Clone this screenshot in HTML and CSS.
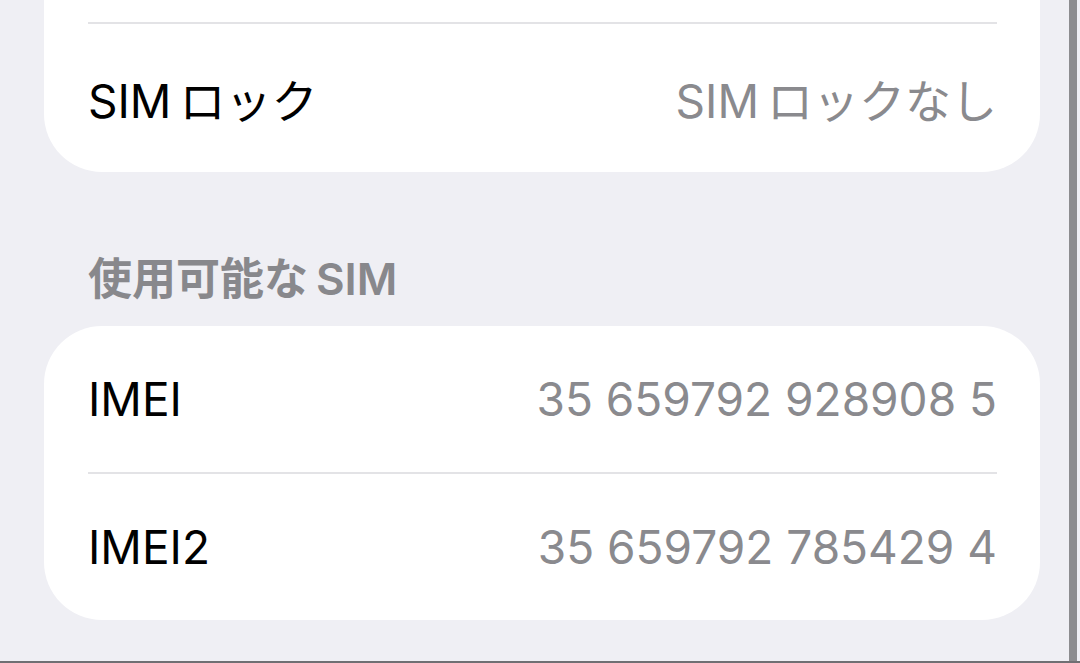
FILE: index.html
```html
<!DOCTYPE html>
<html lang="ja">
  <head>
    <meta charset="UTF-8" />
    <meta name="viewport" content="width=device-width, initial-scale=1.0" />
    <title>情報</title>
    <link rel="stylesheet" href="styles.css">
  </head>
  <body>
    <div class="screen">
      <div class="page">
        <!-- SIMロック start -->
        <div class="card card-top">
          <div class="row-cut"></div>
          <div class="row row-sep row-last">
            <span class="label">SIM<span class="kana">ロック</span></span>
            <span class="value">SIM<span class="kana">ロックなし</span></span>
          </div>
        </div>
        <!-- SIMロック end -->

        <!-- 使用可能なSIM start -->
        <h3 class="section-title">使用可能な<span class="kana">SIM</span></h3>
        <div class="card">
          <div class="row">
            <span class="label">IMEI</span>
            <span class="value">35 659792 928908 5</span>
          </div>
          <div class="row row-sep">
            <span class="label">IMEI2</span>
            <span class="value">35 659792 785429 4</span>
          </div>
        </div>
        <!-- 使用可能なSIM end -->
      </div>
      <div class="edge"></div>
    </div>
  </body>
</html>
```

FILE: styles.css
```css
* {
    margin: 0;
    padding: 0;
    box-sizing: border-box;
}

body {
    background-color: #efeff4;
    font-family: Inter, "Noto Sans CJK JP", sans-serif;
    overflow: hidden;
}

.screen {
    display: grid;
    grid-template-columns: minmax(0, 1fr) 8px;
    height: 663px;
    padding-right: 3px;
    border-bottom: 2px solid #6f6f73;
}

.page {
    padding: 0 29px 0 44px;
}

.edge {
    background-color: #8c8c8f;
}

.card {
    background-color: #fff;
    border-radius: 58px;
}

.card-top {
    border-radius: 0 0 58px 58px;
}

.row-cut {
    height: 22px;
}

.row {
    display: flex;
    align-items: center;
    justify-content: space-between;
    height: 146px;
    margin: 0 43px 0 44px;
    font-size: 46px;
}

.row-sep {
    height: 148px;
    border-top: 2px solid #e3e3e6;
}

.row-last {
    height: 150px;
}

.kana {
    margin-left: 8px;
}

.label {
    color: #000;
}

.value {
    color: #8a8a8e;
}

.section-title {
    margin: 84px 0 24px 44px;
    line-height: 46px;
    font-size: 44px;
    font-weight: 600;
    color: #88888c;
}
```
